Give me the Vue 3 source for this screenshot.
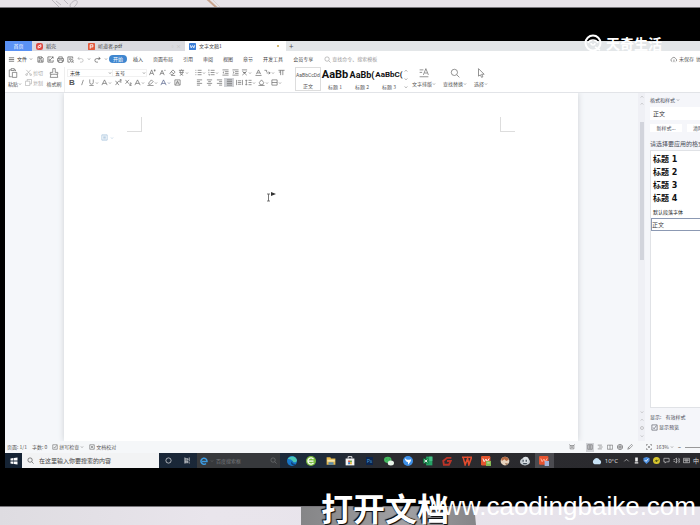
<script setup>
import { h } from 'vue'

const paths = {
  menu: 'M2 4H14M2 8H14M2 12H14',
  save: 'M2 2H11L14 5V14H2ZM5 2V6H10V2M5 14V9H11V14',
  export: 'M9 2H2V14H14V9M7 9L14 2M10 2H14V6M5 6V11H10',
  print: 'M4 6V2H12V6M4 12H1V6H15V12H12M4 9H12V15H4Z',
  preview: 'M13 6V2H2V14H7M5 5H10M5 8H8M11 8A3 3 0 1 0 11 14A3 3 0 1 0 11 8M13 13L15 15',
  undo: 'M5 2L2 6L6 8M2 6H10A4 4 0 0 1 10 14H7',
  redo: 'M11 2L14 6L10 8M14 6H6A4 4 0 0 0 6 14H9',
  search: 'M7 2A5 5 0 1 0 7 12A5 5 0 1 0 7 2M11 11L15 15',
  paste: 'M6 14H2V3H5M10 3H12V5M5 1H10V4H5ZM7 7H14V15H7Z',
  cut: 'M3 2L12 12M13 2L4 12M3 11A2 2 0 1 0 4 15A2 2 0 1 0 3 11M13 11A2 2 0 1 0 13 15A2 2 0 1 0 13 11',
  copy: 'M5 5V1H15V11H11M1 5H11V15H1Z',
  brush: 'M6 1H10V7H14V10H2V7H6ZM3 10L2 15H14L13 10',
  grow: 'M1 14L6 2L11 14M3 10H9M13 1V6M11 3H15',
  shrink: 'M2 14L7 3L12 14M4 10H10M12 3H15',
  eraser: 'M2 10L9 2L14 7L8 13H5ZM5 6L11 11M5 15H14',
  pinyin: 'M2 3H14M8 1V3M5 3V8M11 3V8M3 8H13M5 10L12 15M11 10L4 15',
  italic: 'M10 2L6 14',
  underline: 'M4 1V8A4 4 0 0 0 12 8V1M3 15H13',
  letter: 'M2 14L8 2L14 14M4 10H12',
  super: 'M1 4L9 14M9 4L1 14M11 1H14V4H11V7H15',
  sub: 'M1 2L9 11M9 2L1 11M11 9H14V12H11V15H15',
  marker: 'M4 9L10 2L14 6L8 12H4ZM1 15H15',
  framed: 'M2 2H14V14H2ZM4 13L8 4L12 13M6 9H10',
  bullets: 'M1 3H3M6 3H15M1 8H3M6 8H15M1 13H3M6 13H15',
  numbers: 'M2 1V5M6 3H15M1 8H3M6 8H15M1 12H3V15M6 13H15',
  outdent: 'M1 2H15M7 6H15M7 10H15M1 14H15M5 6L2 8L5 10',
  indent: 'M1 2H15M7 6H15M7 10H15M1 14H15M2 6L5 8L2 10',
  cross: 'M2 2H14M3 5L13 14M13 5L3 14M5 8H11',
  shadeA: 'M3 12L8 2L13 12M5 9H11M1 15H15',
  tabs: 'M1 3H6V7M6 9H14M11 6L14 9L11 12',
  para: 'M1 3H15M6 3V14M11 3V14M2 7H6',
  left: 'M2 2H14M2 6H9M2 10H14M2 14H9',
  center: 'M2 2H14M5 6H11M2 10H14M5 14H11',
  right: 'M2 2H14M7 6H14M2 10H14M7 14H14',
  justify: 'M2 2H14M2 6H14M2 10H14M2 14H14',
  spread: 'M1 2V14M15 2V14M4 4H12M4 8H12M4 12H12',
  spacing: 'M3 2V14M1 4L3 2L5 4M1 12L3 14L5 12M8 3H15M8 8H15M8 13H15',
  bucket: 'M3 8L8 2L13 8L11 13H5ZM1 15H15',
  borders: 'M2 2H14V14H2ZM2 8H14',
  layout: 'M1 3H7M1 7H5M1 14H15M7 11L11 1L15 11M9 8H13',
  pointer: 'M4 1L13 10H9L11 14L9 15L7 11L4 13Z',
  cloud: 'M5 13A4 4 0 0 1 4 6A5 5 0 0 1 13 6A4 4 0 0 1 13 13M9 8V14',
  box: 'M2 2H14V14H2ZM5 8L7 11L12 4',
  proof: 'M2 2H14V14H2ZM5 5L11 11M11 5L5 11',
  page: 'M2 2H14V14H2ZM5 5H11M5 8H11M5 11H11',
  outline: 'M2 3H13M5 8H15M2 13H13',
  book: 'M1 3H15V14H1ZM8 3V14',
  globe: 'M8 1A7 7 0 1 0 8 15A7 7 0 1 0 8 1M1 6H15M1 10H15M8 1V15',
  pen: 'M2 14L4 9L12 1L15 4L7 12ZM4 9L7 12',
  fit: 'M1 5V1H5M11 1H15V5M15 11V15H11M5 15H1V11M5 5L11 11M11 5L5 11',
  focus: 'M3 4H13V13H3ZM1 1L3 4M15 1L13 4M5 8H11M8 6V11',
  up: 'M3 10L8 5L13 10',
  down: 'M3 6L8 11L13 6',
  caret: 'M4 6L8 10L12 6',
  ring: 'M8 2A6 6 0 1 0 8 14A6 6 0 1 0 8 2',
  tasks: 'M2 1V15M2 4H9V7H2M2 10H9V13H2M12 1V10M12 12V15',
  screen: 'M2 3H14V11H8L5 14V11H2Z',
  volume: 'M1 6H4L8 2V14L4 10H1M11 5A5 5 0 0 1 11 11M13 2A9 9 0 0 1 13 14',
  keyboard: 'M1 3H15V13H1ZM3 6H13M3 8H13M5 11H11',
}
const Ico = (p) =>
  h('svg', { viewBox: '0 0 16 16', class: 'ico', 'aria-hidden': 'true' }, [h('path', { d: paths[p.n] })])
Ico.props = ['n']

const quick = ['save', 'export', 'print', 'preview', 'undo']
const menus = ['插入', '页面布局', '引用', '审阅', '视图', '章节', '开发工具', '会员专享']
const fontTop = [{ n: 'grow' }, { n: 'shrink' }, { n: 'eraser' }, { n: 'pinyin', c: 1 }]
const fontBottom = [
  { n: 'italic' }, { n: 'underline', c: 1 }, { n: 'letter', c: 1 }, { n: 'super' }, { n: 'sub' },
  { n: 'letter', c: 1 }, { n: 'marker', c: 1 }, { n: 'letter', c: 1, k: 'ink' }, { n: 'framed' },
]
const paraTop = [
  { n: 'bullets', c: 1 }, { n: 'numbers', c: 1 }, { n: 'outdent' }, { n: 'indent' },
  { n: 'cross', c: 1 }, { n: 'shadeA' }, { n: 'tabs', c: 1 }, { n: 'para' },
]
const paraBottom = [
  { n: 'left' }, { n: 'center' }, { n: 'right' }, { n: 'justify', k: 'on' }, { n: 'spread' },
  { n: 'spacing', c: 1 }, { n: 'bucket', c: 1 }, { n: 'borders', c: 1 },
]
const styles = [
  { s: 'AaBbCcDd', t: '正文', k: 'plain' },
  { s: 'AaBb', t: '标题 1', k: 'big' },
  { s: 'AaBb(', t: '标题 2', k: 'mid' },
  { s: 'AaBbC(', t: '标题 3', k: 'small' },
]
const tools = [
  { n: 'layout', t: '文字排版', c: 1 },
  { n: 'search', t: '查找替换', c: 1 },
  { n: 'pointer', t: '选择', c: 1 },
]
const headings = ['标题 1', '标题 2', '标题 3', '标题 4']
const views = ['page', 'outline', 'book', 'globe', 'pen']
</script>

<template>
  <div class="desk">
    <div class="desk-edge">
      <svg class="doodle" viewBox="0 0 240 8" aria-hidden="true">
        <path d="M50 -2L60 8M70 5C74 -2 80 0 76 5S70 8 70 5M56 1L61 5M64 0L68 4" stroke="#bdb9c0" />
        <path d="M206 -2L217 8" stroke="#c9a48e" stroke-width="2" />
        <path d="M211 -2L221 8" stroke="#d8d0d0" />
      </svg>
    </div>

    <div class="monitor">
      <main class="screen">
        <nav class="tabs">
          <button class="tab home">首页</button>
          <button class="tab docer">
            <svg viewBox="0 0 16 16" class="badge"><rect width="16" height="16" rx="5" fill="#dc4a42" /><path d="M5 12V7L11 4V9L6 11" fill="none" stroke="#fff" stroke-width="2" /></svg>稻壳
          </button>
          <button class="tab pdf">
            <svg viewBox="0 0 16 16" class="badge"><rect width="16" height="16" rx="2" fill="#e25a3c" /><path d="M5 13V4H11V9H5" fill="none" stroke="#fff" stroke-width="2" /></svg>听道者.pdf
            <span class="faint">▫ ×</span>
          </button>
          <button class="tab active">
            <svg viewBox="0 0 16 16" class="badge"><rect width="16" height="16" rx="2" fill="#3c7fd8" /><path d="M3 5L5 11L8 6L11 11L13 5" fill="none" stroke="#fff" stroke-width="2" /></svg>文字文稿1
            <i class="dot"></i>
          </button>
          <button class="plus" aria-label="+">+</button>
        </nav>

        <div class="menubar">
          <button class="file"><Ico n="menu" />文件<Ico n="caret" class="tiny" /></button>
          <div class="quick">
            <button v-for="q in quick" :key="q" :class="{ off: q === 'undo' }"><Ico :n="q" /></button>
            <Ico n="caret" class="tiny" />
            <button><Ico n="redo" /></button>
            <Ico n="caret" class="tiny" />
          </div>
          <button class="pill">开始</button>
          <div class="menus"><button v-for="m in menus" :key="m">{{ m }}</button></div>
          <label class="find"><Ico n="search" /><input value="查找命令、搜索模板" aria-label="查找命令、搜索模板" /></label>
          <div class="sync"><Ico n="cloud" /><button>未保存</button><button>协作</button></div>
        </div>

        <div class="ribbon">
          <button class="large paste"><Ico n="paste" /><span>粘贴<Ico n="caret" class="tiny" /></span></button>
          <div class="stack clip">
            <button><Ico n="cut" />剪切</button>
            <button><Ico n="copy" />复制</button>
          </div>
          <button class="large format"><Ico n="brush" /><span>格式刷</span></button>
          <div class="stack font">
            <div class="row">
              <span class="pick family"><select aria-label="字体"><option>宋体</option></select><Ico n="caret" class="tiny" /></span>
              <span class="pick size"><select aria-label="字号"><option>五号</option></select><Ico n="caret" class="tiny" /></span>
              <button v-for="(b, i) in fontTop" :key="i" class="tool" :class="{ wide: b.c }"><Ico :n="b.n" /><Ico v-if="b.c" n="caret" class="tiny" /></button>
            </div>
            <div class="row">
              <button class="tool bold">B</button>
              <button v-for="(b, i) in fontBottom" :key="i" class="tool" :class="[b.k, { wide: b.c }]"><Ico :n="b.n" /><Ico v-if="b.c" n="caret" class="tiny" /></button>
            </div>
          </div>
          <div class="stack para-tools">
            <div class="row"><button v-for="(b, i) in paraTop" :key="i" class="tool" :class="{ wide: b.c }"><Ico :n="b.n" /><Ico v-if="b.c" n="caret" class="tiny" /></button></div>
            <div class="row"><button v-for="(b, i) in paraBottom" :key="i" class="tool" :class="[b.k, { wide: b.c }]"><Ico :n="b.n" /><Ico v-if="b.c" n="caret" class="tiny" /></button></div>
          </div>
          <div class="gallery">
            <button v-for="s in styles" :key="s.t" class="sample" :class="s.k"><b>{{ s.s }}</b><span>{{ s.t }}</span></button>
            <div class="arrows"><Ico n="up" class="tiny" /><Ico n="down" class="tiny" /><Ico n="down" class="tiny" /></div>
          </div>
          <div class="tools">
            <button v-for="t in tools" :key="t.t" class="large"><Ico :n="t.n" /><span>{{ t.t }}<Ico n="caret" class="tiny" /></span></button>
          </div>
        </div>

        <div class="work">
          <section class="canvas">
            <article class="sheet">
              <div class="corners"><i class="corner tl"></i><i class="corner tr"></i></div>
              <button class="para-handle"><Ico n="page" /><Ico n="caret" class="tiny" /></button>
              <svg class="cursor" viewBox="0 0 10 10" aria-hidden="true"><path d="M1 2H4M2.500 2V9M1 9H4" fill="none" stroke="#555" stroke-width=".8" /><path d="M5 0L10 2L5 4Z" fill="#333" /></svg>
            </article>
          </section>
          <div class="scroll">
            <div class="scroll-end"><Ico n="up" class="tiny" /><Ico n="up" class="tiny" /></div>
            <div class="thumb"></div>
            <div class="scroll-end foot"><Ico n="down" class="tiny" /><Ico n="up" class="tiny" /><Ico n="ring" class="tiny" /><Ico n="down" class="tiny" /></div>
          </div>
          <aside class="side">
            <h2>格式和样式<Ico n="caret" class="tiny" /></h2>
            <input class="current" value="正文" aria-label="格式和样式" />
            <div class="actions"><button>新样式...</button><button>清除格式</button></div>
            <p>请选择要应用的格式</p>
            <div class="list">
              <button v-for="t in headings" :key="t" class="heading">{{ t }}</button>
              <button class="default">默认段落字体</button>
              <button class="chosen">正文</button>
            </div>
            <label class="show">显示: <select><option>有效样式</option></select></label>
            <label class="check"><input type="checkbox" checked /><Ico n="box" />显示预览</label>
          </aside>
        </div>

        <footer class="status">
          <span>页面: 1/1</span>
          <span>字数: 0</span>
          <button><Ico n="box" />拼写检查<Ico n="caret" class="tiny" /></button>
          <button><Ico n="proof" />文档校对</button>
          <div class="views">
            <button class="focus"><Ico n="focus" /></button>
            <button v-for="v in views" :key="v" :class="{ on: v === 'page' }"><Ico :n="v" /></button>
          </div>
          <div class="zoom"><Ico n="fit" /><button>163%<Ico n="caret" class="tiny" /></button><b>−</b><i class="track"></i></div>
        </footer>

        <div class="taskbar">
          <button class="start" aria-label="开始"><svg viewBox="0 0 16 16"><path d="M1 3L7 2V7H1ZM8 2L15 1V7H8ZM1 9H7V14L1 13ZM8 9H15V15L8 14Z" fill="#fff" /></svg></button>
          <label class="tasksearch"><Ico n="search" /><input value="在这里输入你要搜索的内容" aria-label="在这里输入你要搜索的内容" /></label>
          <div class="sys"><button><Ico n="ring" /></button><button><Ico n="tasks" /></button></div>
          <label class="iebox">
            <svg viewBox="0 0 16 16"><path d="M4 9H14A6 6 0 1 0 12 13" fill="none" stroke="#3d9be0" stroke-width="3" /></svg>
            <Ico n="caret" class="tiny" /><input value="百度搜索框" aria-label="百度搜索框" /><Ico n="search" />
          </label>
          <div class="apps">
            <button><svg viewBox="0 0 16 16"><circle cx="8" cy="8" r="8" fill="#1877c9" /><path d="M1 5C4-1 15-1 16 7C15 11 10 11 9 8C7 5 3 4 1 5Z" fill="#4ac6b5" /><path d="M9 8C7 10 9 13 14 13L11 15C6 15 5 10 9 8Z" fill="#123f77" /></svg></button>
            <button><svg viewBox="0 0 16 16"><circle cx="8" cy="8" r="8" fill="#76ba3e" /><path d="M12 5A5 5 0 1 0 12 11M4 8H12" fill="none" stroke="#fff" stroke-width="2" /></svg></button>
            <button><svg viewBox="0 0 16 16"><path d="M1 2H7L8 4H15V14H1Z" fill="#e4b94f" /><path d="M2 6H14V9H2Z" fill="#f7e6ae" /><path d="M4 10H12V14H4Z" fill="#5a8bb0" /></svg></button>
            <button><svg viewBox="0 0 16 16"><path d="M1 4H15V15H1Z" fill="#f4f4f4" /><path d="M5 4V1H11V4" fill="none" stroke="#eee" stroke-width="1.500" /><path d="M5 7H8V10H5Z" fill="#d75543" /><path d="M8 7H11V10H8Z" fill="#6dab45" /><path d="M5 10H8V13H5Z" fill="#3c83c9" /><path d="M8 10H11V13H8Z" fill="#e3b63e" /></svg></button>
            <button><span class="ps">Ps</span></button>
            <button><svg viewBox="0 0 16 16"><ellipse cx="6" cy="6" rx="6" ry="5" fill="#43b85e" /><ellipse cx="11" cy="11" rx="5" ry="4" fill="#e8f3ea" /><path d="M4 5H5M8 5H9" stroke="#175c2a" /></svg></button>
            <button><svg viewBox="0 0 16 16"><circle cx="8" cy="8" r="8" fill="#3e90e8" /><path d="M3 3C6 7 9 6 13 5C13 9 10 11 8 14L8 10C5 9 3 6 3 3Z" fill="#fff" /></svg></button>
            <button><svg viewBox="0 0 16 16"><path d="M5 1H15V15H5Z" fill="#25a366" /><path d="M10 1H15V8H10Z" fill="#47c087" /><path d="M0 4H9V12H0Z" fill="#107c41" /><path d="M2 6L7 10M7 6L2 10" stroke="#fff" stroke-width="1.500" /></svg></button>
            <button><svg viewBox="0 0 16 16"><path d="M15 3H8L2 8L3 14H11L14 8H8" fill="none" stroke="#bd3428" stroke-width="3" /></svg></button>
            <button><svg viewBox="0 0 16 16"><path d="M0 2H16M2 3L5 14L9 4L11 14L15 3" fill="none" stroke="#e14c2e" stroke-width="2.500" /></svg></button>
            <button><svg viewBox="0 0 16 16"><rect width="15" height="15" rx="2" fill="#e3552f" /><path d="M3 4L5 9L8 5L10 9L13 4" fill="none" stroke="#fff" stroke-width="1.500" /><path d="M8 8H16V16H8Z" fill="#85bb55" /><path d="M10 11H14" stroke="#fff" /></svg></button>
            <button><svg viewBox="0 0 16 16"><circle cx="8" cy="8" r="7" fill="#e6d2bd" /><path d="M2 5C5 0 12 0 14 6L10 8L7 5L3 8Z" fill="#b36943" /><path d="M8 11L13 12L10 15Z" fill="#a47c5f" /></svg></button>
            <button><svg viewBox="0 0 16 16"><ellipse cx="8" cy="9" rx="8" ry="6" fill="#c5ccd2" /><circle cx="9" cy="6" r="5" fill="#dde2e6" /><path d="M5 6V9M10 6V9M5 12H11" stroke="#46515c" stroke-width="2" /></svg></button>
            <button class="running"><svg viewBox="0 0 16 16"><rect width="15" height="14" rx="2" fill="#e75430" /><path d="M3 4L5 9L8 5L10 9L13 4" fill="none" stroke="#ffb9a6" stroke-width="1.500" /><path d="M9 8H16V16H9Z" fill="#a2b4dc" /></svg></button>
          </div>
          <div class="tray">
            <svg viewBox="0 0 16 16" class="weather"><path d="M4 13A4 4 0 0 1 3 6A5 5 0 0 1 12 6A4 4 0 0 1 13 13Z" fill="#c8e2f5" /></svg>
            <span class="temp">10°C</span>
            <Ico n="up" />
            <svg viewBox="0 0 16 16"><path d="M5 1H11V10H5ZM4 12H12V15H4Z" fill="#eee" /></svg>
            <svg viewBox="0 0 16 16"><path d="M1 2L8 0L15 2V9L8 16L1 9Z" fill="#4b8fe0" /><path d="M4 7L7 10L12 4" fill="none" stroke="#fff" stroke-width="2" /></svg>
            <svg viewBox="0 0 16 16"><circle cx="8" cy="8" r="8" fill="#d9c72e" /><path d="M4 10L8 7V11L13 6" fill="none" stroke="#3e4a18" stroke-width="2" /></svg>
            <Ico n="screen" /><Ico n="volume" /><Ico n="keyboard" />
            <span class="ime">中</span>
          </div>
        </div>
      </main>
    </div>

    <div class="desk-edge front"><div class="stand"></div></div>

    <div class="brand">
      <svg viewBox="0 0 18 18" aria-hidden="true"><circle cx="9" cy="9" r="7.500" fill="none" stroke="#fff" stroke-width="2" /><path d="M4 9C6 5 12 5 14 9M7 9A2 2 0 1 0 11 9M11 13L16 16" fill="none" stroke="#fff" stroke-width="1.500" /></svg>
      天奇生活
    </div>
    <div class="subtitle">打开文档</div>
    <div class="site">www.caodingbaike.com</div>
  </div>
</template>

<style>
body { margin: 0; background: #000; }
</style>

<style scoped>
* { box-sizing: border-box; }
.desk {
  position: relative;
  display: flex;
  flex-direction: column;
  height: 100vh;
  overflow: hidden;
  background: #000;
  color: #555;
  font: 5px/8px "Noto Sans CJK SC", sans-serif;
  white-space: nowrap;
}
button, input, select {
  margin: 0;
  padding: 0;
  border: 0;
  border-radius: 0;
  background: none;
  color: inherit;
  font: inherit;
  appearance: none;
  outline: 0;
  min-width: 0;
}
button { display: flex; align-items: center; white-space: nowrap; flex: none; }
svg { display: block; flex: none; width: 8px; height: 8px; }
.ico { fill: none; stroke: currentColor; stroke-width: 1.4; width: 7px; height: 7px; }
.ico.tiny { width: 4px; height: 4px; stroke-width: 2; }
.desk-edge { flex: none; height: 8px; background: #e7e3e8; border-bottom: 1px solid #77757a; overflow: hidden; }
.doodle { width: 240px; height: 8px; fill: none; }
.desk-edge.front { height: 19px; border-top: 1px solid #77757a; border-bottom: 0; background: linear-gradient(90deg, #dedce1, #e9e5ec 30%, #e6e2ea); }
.stand { width: 25%; height: 100%; margin-left: 43%; background: linear-gradient(90deg, #858587, #a1a1a4 60%, #858588); clip-path: polygon(0 0, 99% 0, 100% 100%, 0 100%); }
.monitor { flex: 1; min-height: 0; display: flex; padding: 33px 0 38px 5px; }
.screen { flex: 1; min-width: 0; display: flex; flex-direction: column; background: #fff; overflow: hidden; }

.tabs { flex: none; display: flex; height: 10px; background: #e3e6e8; }
.tab { gap: 3px; padding: 0 4px; background: #dadbe0; color: #444; }
.badge { width: 7px; height: 7px; }
.home { width: 27px; justify-content: center; background: #5a92f5; color: #fff; }
.docer { width: 52px; }
.pdf { width: 101px; }
.active { width: 101px; background: #fff; }
.faint { margin-left: auto; color: #bbb; }
.dot { width: 2px; height: 2px; margin: 0 3px 0 auto; border-radius: 50%; background: #c4a24a; }
.plus { padding: 0 3px; font-size: 8px; }

.menubar { flex: none; display: flex; align-items: center; height: 16px; padding-left: 3px; }
.file { width: 29px; gap: 2px; color: #333; }
.quick { display: flex; align-items: center; gap: 3px; width: 72px; color: #444; }
.off { color: #aaa; }
.pill { height: 8px; padding: 0 4px; border-radius: 4px; background: #3f86cf; color: #fff; }
.menus { display: flex; gap: 10px; padding: 0 11px 0 6px; color: #444; }
.find { flex: 1; display: flex; align-items: center; gap: 1px; color: #999; }
.find input { width: 60px; }
.sync { flex: none; display: flex; align-items: center; gap: 2px; width: 30px; }

.ribbon { flex: none; display: flex; height: 26px; padding: 0 3px; border-bottom: 1px solid #e2e4e8; }
.large { flex-direction: column; justify-content: flex-start; gap: 2px; padding-top: 1px; }
.large > .ico { width: 10px; height: 10px; stroke-width: 1; }
.large span { display: flex; align-items: center; }
.paste { width: 17px; align-items: flex-start; }
.stack { display: flex; flex-direction: column; gap: 1px; padding-top: 1px; }
.clip { width: 21px; color: #aaa; }
.clip button { height: 9px; gap: 1px; }
.format { width: 16px; }
.row { display: flex; height: 9px; align-items: center; }
.font { margin-left: 2px; padding-left: 2px; border-left: 1px solid #eee; width: 130px; }
.pick { display: flex; align-items: center; justify-content: space-between; height: 8px; padding-left: 2px; border: 1px solid #f1f1f1; color: #333; }
.family { width: 46px; }
.size { width: 34px; border-left: 0; }
.tool { justify-content: center; width: 10px; height: 9px; }
.tool.wide { width: 13px; }
.bold { font: bold 8px/8px "Liberation Sans", sans-serif; }
.ink { color: #3b4a78; }
.on { background: #d0d2d6; }
.para-tools { width: 101px; }
.gallery { display: flex; height: 24px; width: 115px; }
.sample { flex-direction: column; justify-content: space-between; width: 26px; padding-top: 1px; }
.sample b { display: flex; align-items: center; height: 13px; color: #111; font-family: Roboto, sans-serif; }
.plain { border: 1px solid #ddd; }
.plain b { height: 12px; font-weight: 400; font-size: 5px; color: #555; }
.sample.big, .sample.small { width: 28px; }
.big b { font-size: 11px; }
.mid b { font-size: 9px; }
.small b { font-size: 8px; }
.arrows { display: flex; flex-direction: column; justify-content: space-around; padding-left: 1px; }
.tools { display: flex; gap: 7px; padding-left: 2px; }

.work { flex: 1; min-height: 0; display: flex; background: #f5f7fa; }
.canvas { flex: 1; display: flex; padding: 0 60px 0 59px; }
.sheet { position: relative; flex: 1; background: #fff; box-shadow: 0 0 6px #ccd0d4; clip-path: inset(0 -8px); }
.corners { display: flex; justify-content: space-between; padding: 24px 63px 0; }
.corner { width: 15px; height: 15px; border-bottom: 1px solid #ddd; }
.tl { border-right: 1px solid #ddd; }
.tr { border-left: 1px solid #ddd; }
.para-handle { gap: 2px; padding: 2px 37px; color: #8fb3d2; }
.cursor { position: absolute; left: 202px; top: 99px; width: 10px; height: 10px; }
.scroll { display: flex; flex-direction: column; width: 7px; align-items: center; background: #eff0f5; color: #999; }
.scroll-end { display: flex; flex-direction: column; gap: 3px; height: 29px; padding-top: 2px; }
.thumb { width: 4px; height: 138px; background: #d2d4dc; }
.foot { height: auto; margin-top: auto; gap: 4px; padding-bottom: 3px; }
.side { flex: none; width: 55px; display: flex; flex-direction: column; padding-left: 5px; overflow: hidden; background: #f5f6fa; color: #4a4d59; }
.side h2 { display: flex; align-items: center; gap: 1px; height: 14px; margin: 0; font: inherit; }
.current { flex: none; width: 60px; height: 13px; padding-left: 3px; background: #fff; color: #333; font-size: 6px; }
.actions { display: flex; gap: 5px; padding: 4px 0; }
.actions button { justify-content: center; width: 32px; height: 8px; background: #fff; }
.side p { margin: 0; padding-top: 4px; height: 14px; font-size: 6px; }
.list { flex: 1; min-height: 0; display: flex; flex-direction: column; width: 60px; padding-top: 2px; border: 1px solid #e0e2e6; background: #fff; }
.heading { height: 13px; padding-left: 2px; color: #111; font: bold 8px/13px "DejaVu Sans", "Noto Sans CJK SC", sans-serif; }
.default { height: 13px; padding-left: 2px; color: #222; }
.chosen { height: 13px; border: 1px solid #8c99b3; color: #444; font-size: 6px; }
.show { display: flex; align-items: center; gap: 4px; padding-top: 4px; height: 13px; }
.check { display: flex; align-items: center; gap: 1px; height: 12px; margin-bottom: 8px; }
.check input { width: 0; height: 0; }

.status { flex: none; display: flex; align-items: center; gap: 5px; height: 12px; padding-left: 2px; background: #f5f7f9; }
.status button { gap: 1px; }
.status .ico { width: 6px; height: 6px; }
.status .ico.tiny { width: 4px; height: 4px; }
.views { display: flex; align-items: center; gap: 2px; margin-left: auto; }
.views button { justify-content: center; width: 8px; height: 9px; }
.focus { margin-right: 8px; }
.zoom { display: flex; align-items: center; gap: 4px; padding-left: 7px; width: 61px; }
.track { flex: 1; height: 1px; background: #999; }

.taskbar { flex: none; display: flex; height: 15px; background: linear-gradient(90deg, #152334, #1e2b3b 45%, #2b2b2f 55%, #2a2a2e); color: #ddd; }
.start { width: 17px; justify-content: center; }
.tasksearch { display: flex; align-items: center; gap: 5px; width: 137px; padding-left: 5px; background: #f2f3f4; color: #444; }
.tasksearch input { flex: 1; font-size: 6px; }
.sys { display: flex; width: 38px; justify-content: space-around; color: #fff; }
.iebox { display: flex; align-items: center; gap: 2px; width: 83px; padding: 0 3px; background: #37393c; color: #77797c; }
.iebox input { flex: 1; }
.apps { display: grid; grid-template-columns: repeat(14, 1fr); width: 274px; padding-left: 2px; }
.apps button { justify-content: center; }
.apps svg { width: 10px; height: 10px; }
.apps .running { background: #4b4b50; }
.ps { padding: 0 1px; background: #0b254e; color: #4c9cdd; }
.tray { display: flex; align-items: center; gap: 3px; margin-left: auto; padding-right: 1px; }
.tray svg { width: 7px; height: 7px; }
.tray .weather { width: 10px; height: 10px; }
.temp { font: 6px/8px "Noto Sans", sans-serif; padding-right: 2px; }
.ime { font-size: 6px; }

.brand { position: absolute; right: 38px; top: 33px; display: flex; align-items: center; gap: 4px; color: #fff; font: bold 14px/20px "Noto Sans CJK SC", sans-serif; }
.brand svg { width: 18px; height: 18px; }
.subtitle { position: absolute; left: 321px; bottom: 0; color: #fff; font: bold 32px/36px "Noto Sans CJK SC", sans-serif; text-shadow: 1px 1px 1px #000, -1px -1px 1px #000; }
.site { position: absolute; right: 4px; bottom: 3px; color: #fff; font: 26px/32px "Liberation Sans", sans-serif; }
</style>
